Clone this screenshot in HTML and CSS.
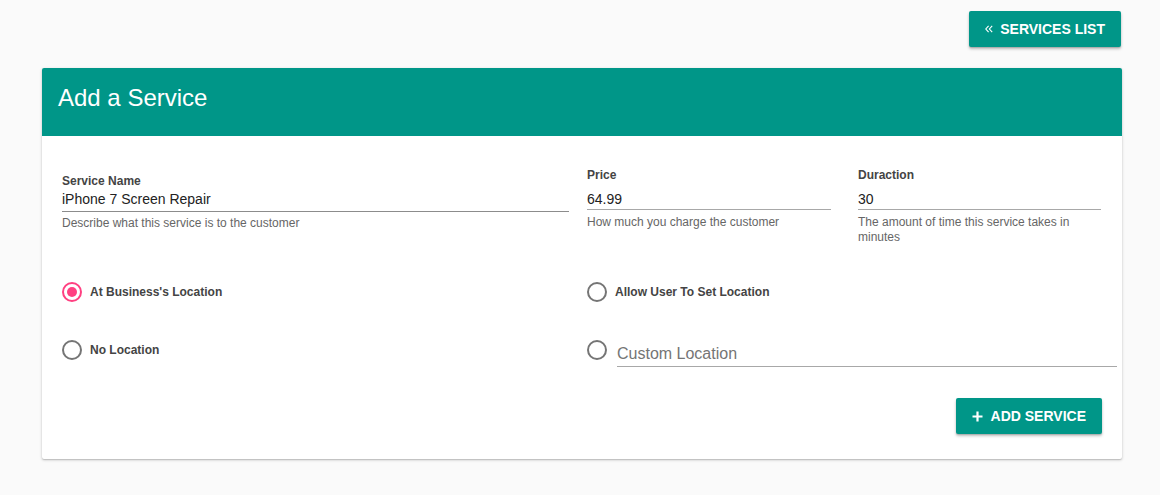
FILE: index.html
```html
<!DOCTYPE html>
<html lang="en">
<head>
<meta charset="utf-8">
<title>Add a Service</title>
<link rel="stylesheet" href="styles.css">
</head>
<body>
<div class="page">
  <div class="toolbar">
    <button class="btn" type="button">
      <svg class="btn-icon chevrons" width="8" height="8" viewBox="0 0 8 8" aria-hidden="true"><path d="M3.6 0.8 L0.8 4 L3.6 7.2 M7.2 0.8 L4.4 4 L7.2 7.2" fill="none" stroke="#fff" stroke-width="1.1"/></svg>
      <span>Services List</span>
    </button>
  </div>

  <section class="card">
    <header class="card-header">
      <h1 class="card-title">Add a Service</h1>
    </header>
    <div class="card-body">
      <div class="fields">
        <div class="col col-name">
          <div class="field field-name">
            <label class="field-label">Service Name</label>
            <div class="field-input field-input-dark">iPhone 7 Screen Repair</div>
            <div class="field-help">Describe what this service is to the customer</div>
          </div>
        </div>
        <div class="col col-price">
          <div class="field">
            <label class="field-label">Price</label>
            <div class="field-input">64.99</div>
            <div class="field-help">How much you charge the customer</div>
          </div>
        </div>
        <div class="col col-duration">
          <div class="field">
            <label class="field-label">Duraction</label>
            <div class="field-input">30</div>
            <div class="field-help">The amount of time this service takes in minutes</div>
          </div>
        </div>
      </div>

      <div class="radios">
        <div class="radio-item">
          <span class="radio radio-checked"></span>
          <span class="radio-label">At Business's Location</span>
        </div>
        <div class="radio-item">
          <span class="radio"></span>
          <span class="radio-label">Allow User To Set Location</span>
        </div>
        <div class="radio-item">
          <span class="radio"></span>
          <span class="radio-label">No Location</span>
        </div>
        <div class="radio-item radio-custom">
          <span class="radio"></span>
          <div class="custom-input">Custom Location</div>
        </div>
      </div>

      <div class="actions">
        <button class="btn" type="button">
          <svg class="btn-icon" width="11" height="11" viewBox="0 0 11 11" aria-hidden="true"><path d="M5.5 0.5 V10.5 M0.5 5.5 H10.5" fill="none" stroke="#fff" stroke-width="2.2"/></svg>
          <span>Add Service</span>
        </button>
      </div>
    </div>
  </section>
</div>
</body>
</html>
```

FILE: styles.css
```css
* { box-sizing: border-box; }

html, body {
  margin: 0;
  padding: 0;
  background: #fafafa;
  font-family: "Liberation Sans", Arial, Helvetica, sans-serif;
  color: #333;
}

.page {
  padding: 11px 38px 30px 42px;
}

.toolbar {
  display: flex;
  justify-content: flex-end;
  padding-right: 1px;
  margin-bottom: 21px;
}

.btn {
  display: inline-flex;
  align-items: center;
  height: 36px;
  padding: 0 16px;
  border: none;
  border-radius: 2px;
  background: #009688;
  color: #fff;
  font-family: "Liberation Sans", Arial, Helvetica, sans-serif;
  font-size: 14px;
  font-weight: bold;
  text-transform: uppercase;
  box-shadow: 0 2px 3px rgba(0, 0, 0, 0.25), 0 1px 1px rgba(0, 0, 0, 0.12);
  cursor: pointer;
}

.btn-icon {
  display: block;
  margin-right: 8px;
}

.chevrons {
  margin-right: 7px;
}

.card {
  background: #fff;
  border-radius: 2px;
  box-shadow: 0 1px 3px rgba(0, 0, 0, 0.22), 0 1px 1px rgba(0, 0, 0, 0.1);
  overflow: visible;
}

.card-header {
  height: 68px;
  background: #009688;
  padding: 16px 16px 0;
  border-radius: 2px 2px 0 0;
}

.card-title {
  margin: 0;
  font-size: 24px;
  line-height: 28px;
  font-weight: normal;
  color: #fff;
}

.card-body {
  padding: 31px 20px 25px;
}

.fields {
  display: grid;
  grid-template-columns: 525px 271px 1fr;
  align-items: start;
}

.col-name { padding-right: 18px; }
.col-price { padding-right: 27px; }
.col-duration { padding-right: 1px; }

.field-name { margin-top: 6px; }

.field-label {
  display: block;
  font-size: 12px;
  line-height: 16px;
  font-weight: bold;
  color: #444;
}

.field-input {
  margin-top: 6px;
  font-size: 14px;
  line-height: 20px;
  color: #222;
  border-bottom: 1px solid #a8a8a8;
}

.field-name .field-input {
  margin-top: 0;
  padding-bottom: 2px;
}

.field-input-dark {
  border-bottom-color: #8c8c8c;
}

.field-help {
  margin-top: 5px;
  font-size: 12px;
  line-height: 15px;
  color: #666;
}

.field-name .field-help {
  margin-top: 4px;
}

.radios {
  display: grid;
  grid-template-columns: 525px 1fr;
  row-gap: 38px;
  margin-top: 37px;
}

.radio-item {
  display: flex;
  align-items: center;
  height: 20px;
}

.radio {
  flex: none;
  width: 20px;
  height: 20px;
  border: 2px solid #757575;
  border-radius: 50%;
  margin-right: 8px;
  display: flex;
  align-items: center;
  justify-content: center;
}

.radio-checked {
  border-color: #ff4081;
}

.radio-checked::after {
  content: "";
  width: 10px;
  height: 10px;
  border-radius: 50%;
  background: #ff4081;
}

.radio-label {
  font-size: 12px;
  line-height: 16px;
  font-weight: bold;
  color: #444;
}

.radio-custom {
  align-items: flex-start;
  height: auto;
}

.radio-custom .radio {
  margin-right: 10px;
}

.custom-input {
  width: 500px;
  margin-top: 4px;
  font-size: 16px;
  line-height: 20px;
  padding-bottom: 2px;
  color: #757575;
  border-bottom: 1px solid #a8a8a8;
}

.actions {
  display: flex;
  justify-content: flex-end;
  margin-top: 31px;
}
```
